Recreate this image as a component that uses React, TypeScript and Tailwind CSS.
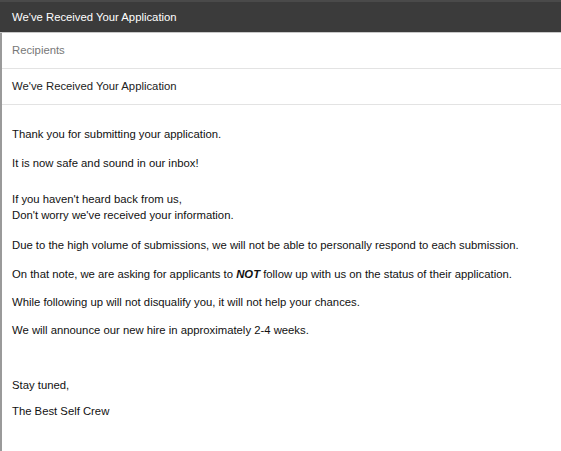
export default function App() {
  const font = { fontFamily: '"Liberation Sans", Arial, sans-serif' };

  return (
    <div className="h-[451px] w-[561px] overflow-hidden bg-white" style={font}>
      {/* HEADER */}
      <div className="flex h-[33px] items-center border-t-2 border-t-[#4a4a4a] border-b border-b-[#c8c8c8] bg-[#3b3b3b] px-3 text-[11.3px] text-white">
        We've Received Your Application
      </div>

      <div className="h-[418px] border-l-2 border-l-[#9a9a9a]">
        {/* RECIPIENTS */}
        <div className="flex h-[36px] items-center border-b border-b-[#e3e3e3] px-[10px] text-[11.3px] text-[#777]">
          Recipients
        </div>

        {/* SUBJECT */}
        <div className="flex h-[36px] items-center border-b border-b-[#e3e3e3] px-[10px] text-[11.3px] text-[#222]">
          We've Received Your Application
        </div>

        {/* BODY */}
        <div className="px-[10px] pt-[21px] text-[11.3px] leading-[16px] text-[#111]">
          <p>Thank you for submitting your application.</p>
          <p className="mt-[13px]">It is now safe and sound in our inbox!</p>
          <p className="mt-[20px]">
            If you haven't heard back from us,
            <br />
            Don't worry we've received your information.
          </p>
          <p className="mt-[14px]">
            Due to the high volume of submissions, we will not be able to personally respond to each submission.
          </p>
          <p className="mt-[13px]">
            On that note, we are asking for applicants to <b><i>NOT</i></b> follow up with us on the status of their application.
          </p>
          <p className="mt-[12px]">
            While following up will not disqualify you, it will not help your chances.
          </p>
          <p className="mt-[12px]">We will announce our new hire in approximately 2-4 weeks.</p>
          <p className="mt-[39px]">Stay tuned,</p>
          <p className="mt-[10px]">The Best Self Crew</p>
        </div>
      </div>
    </div>
  );
}
